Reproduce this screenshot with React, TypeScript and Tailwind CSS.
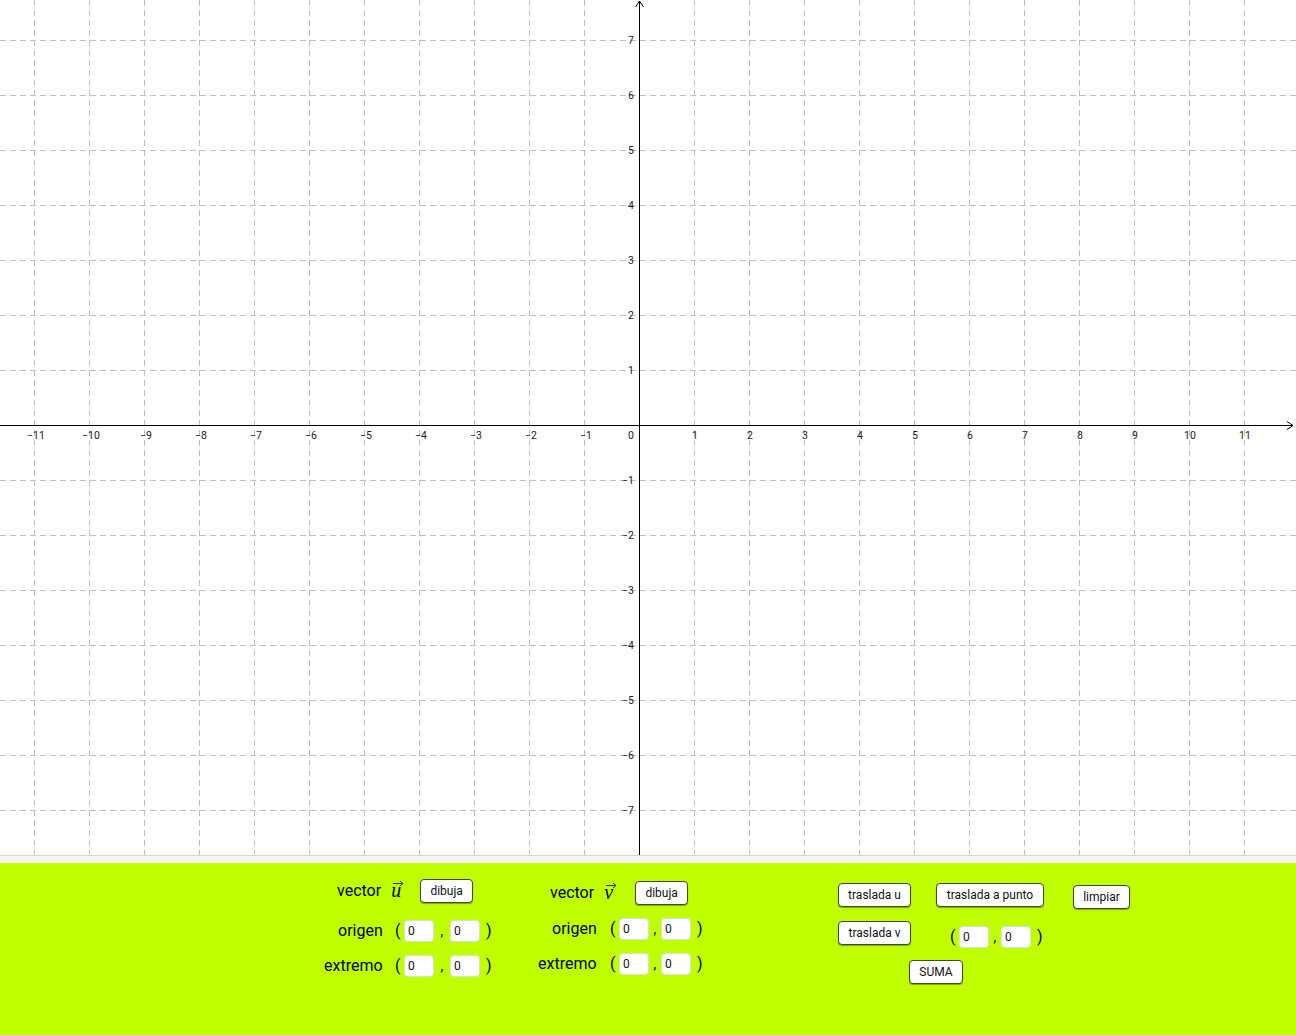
import React from 'react';

const ORIGIN_X = 639;
const ORIGIN_Y = 425;
const STEP = 55;

const xTicks = Array.from({ length: 23 }, (_, i) => i - 11).filter((k) => k !== 0);
const yTicks = Array.from({ length: 15 }, (_, i) => i - 7).filter((k) => k !== 0);

const fmt = (n: number) => (n < 0 ? `\u2212${Math.abs(n)}` : `${n}`);

function Graph() {
  return (
    <svg width={1296} height={855} className="block" style={{ fontFamily: 'Roboto, "Liberation Sans", sans-serif' }}>
      {/* grid */}
      {xTicks.map((k) => (
        <line
          key={`gx${k}`}
          x1={ORIGIN_X + k * STEP + 0.5}
          x2={ORIGIN_X + k * STEP + 0.5}
          y1={0}
          y2={855}
          stroke="#c0c0c0"
          strokeDasharray="6 4"
        />
      ))}
      {yTicks.map((k) => (
        <line
          key={`gy${k}`}
          x1={0}
          x2={1296}
          y1={ORIGIN_Y + k * STEP + 0.5}
          y2={ORIGIN_Y + k * STEP + 0.5}
          stroke="#c0c0c0"
          strokeDasharray="6 4"
        />
      ))}

      {/* axes */}
      <line x1={0} x2={1293} y1={ORIGIN_Y + 0.5} y2={ORIGIN_Y + 0.5} stroke="#000" />
      <polyline points="1287,421.5 1293,425.5 1287,429.5" fill="none" stroke="#000" />
      <line x1={ORIGIN_X + 0.5} x2={ORIGIN_X + 0.5} y1={1} y2={855} stroke="#000" />
      <polyline points="635.5,7 639.5,1 643.5,7" fill="none" stroke="#000" />

      {/* labels */}
      {xTicks.map((k) => (
        <text
          key={`lx${k}`}
          x={ORIGIN_X + k * STEP + (k < 0 ? 2 : 1)}
          y={439}
          fontSize={10.5}
          textAnchor="middle"
          fill="#222"
        >
          {fmt(k)}
        </text>
      ))}
      <text x={631} y={439} fontSize={10.5} textAnchor="middle" fill="#222">
        0
      </text>
      {yTicks.map((k) => (
        <text
          key={`ly${k}`}
          x={634}
          y={ORIGIN_Y - k * STEP + 4}
          fontSize={10.5}
          textAnchor="end"
          fill="#222"
        >
          {fmt(k)}
        </text>
      ))}
    </svg>
  );
}

function Vec({ letter }: { letter: string }) {
  return (
    <span
      className="relative inline-block italic text-[20px] leading-none w-[12px]"
      style={{ fontFamily: '"Liberation Serif", serif' }}
    >
      {letter}
      <svg width={11} height={7} className="absolute left-[2px] top-[0px]" viewBox="0 0 11 7">
        <line x1={0} y1={3.5} x2={10} y2={3.5} stroke="#333" strokeWidth={1} />
        <polyline points="7,1 10,3.5 7,6" fill="none" stroke="#333" strokeWidth={1} />
      </svg>
    </span>
  );
}

function Btn({ children, className = '' }: { children: React.ReactNode; className?: string }) {
  return (
    <div
      className={`h-[24px] flex items-center justify-center bg-white border border-[#444] rounded-[4px] shadow-[0_1px_1px_rgba(0,0,0,0.35)] text-[12px] text-[#111] ${className}`}
    >
      {children}
    </div>
  );
}

function Field() {
  return (
    <div className="w-[30px] h-[22px] bg-white rounded-[4px] border border-[#dcdcdc] flex items-center pl-[3px] text-[12px] text-[#111]">
      0
    </div>
  );
}

function Pair({ comma = 16 }: { comma?: number }) {
  return (
    <div className="flex items-center h-[22px] text-[16px] leading-none">
      <span className="w-[9px]">(</span>
      <Field />
      <span className={`${comma === 16 ? 'w-[16px]' : 'w-[12px]'} text-center text-[14px]`}>,</span>
      <Field />
      <span className="ml-[6px]">)</span>
    </div>
  );
}

export default function App() {
  return (
    <div className="w-[1296px] h-[1035px] bg-white overflow-hidden text-black" style={{ fontFamily: 'Roboto, "Liberation Sans", sans-serif' }}>
      <Graph />
      <div className="h-[8px] border-t border-[#d6d6d6] bg-[#f5f5f5]" />
      <div className="h-[172px] bg-[#c0ff00] flex">
        {/* vector u */}
        <div className="ml-[324px] w-[170px] flex flex-col">
          <div className="mt-[16px] h-[24px] flex items-center pl-[13px]">
            <span className="text-[16px]">vector</span>
            <span className="ml-[10px] mt-[2px]">
              <Vec letter="u" />
            </span>
            <Btn className="ml-[17px] w-[53px]">dibuja</Btn>
          </div>
          <div className="mt-[17px] h-[22px] flex items-center pl-[14px]">
            <span className="text-[16px] w-[57px]">origen</span>
            <Pair />
          </div>
          <div className="mt-[13px] h-[22px] flex items-center">
            <span className="text-[16px] w-[71px]">extremo</span>
            <Pair />
          </div>
        </div>

        {/* vector v */}
        <div className="ml-[44px] w-[175px] flex flex-col">
          <div className="mt-[18px] h-[24px] flex items-center pl-[12px]">
            <span className="text-[16px]">vector</span>
            <span className="ml-[10px] mt-[2px]">
              <Vec letter="v" />
            </span>
            <Btn className="ml-[19px] w-[53px]">dibuja</Btn>
          </div>
          <div className="mt-[13px] h-[22px] flex items-center pl-[14px]">
            <span className="text-[16px] w-[58px]">origen</span>
            <Pair comma={12} />
          </div>
          <div className="mt-[13px] h-[22px] flex items-center">
            <span className="text-[16px] w-[72px]">extremo</span>
            <Pair comma={12} />
          </div>
        </div>

        {/* traslados */}
        <div className="ml-[125px] flex flex-col">
          <div className="mt-[20px] h-[24px] flex items-start">
            <Btn className="w-[73px]">traslada u</Btn>
            <Btn className="ml-[25px] w-[108px]">traslada a punto</Btn>
            <Btn className="ml-[29px] mt-[2px] w-[57px]">limpiar</Btn>
          </div>
          <div className="mt-[14px] h-[24px] flex items-start">
            <Btn className="w-[73px]">traslada v</Btn>
            <div className="ml-[39px] mt-[5px]">
              <Pair comma={12} />
            </div>
          </div>
          <div className="mt-[15px] flex">
            <Btn className="ml-[71px] w-[54px]">SUMA</Btn>
          </div>
        </div>
      </div>
    </div>
  );
}
